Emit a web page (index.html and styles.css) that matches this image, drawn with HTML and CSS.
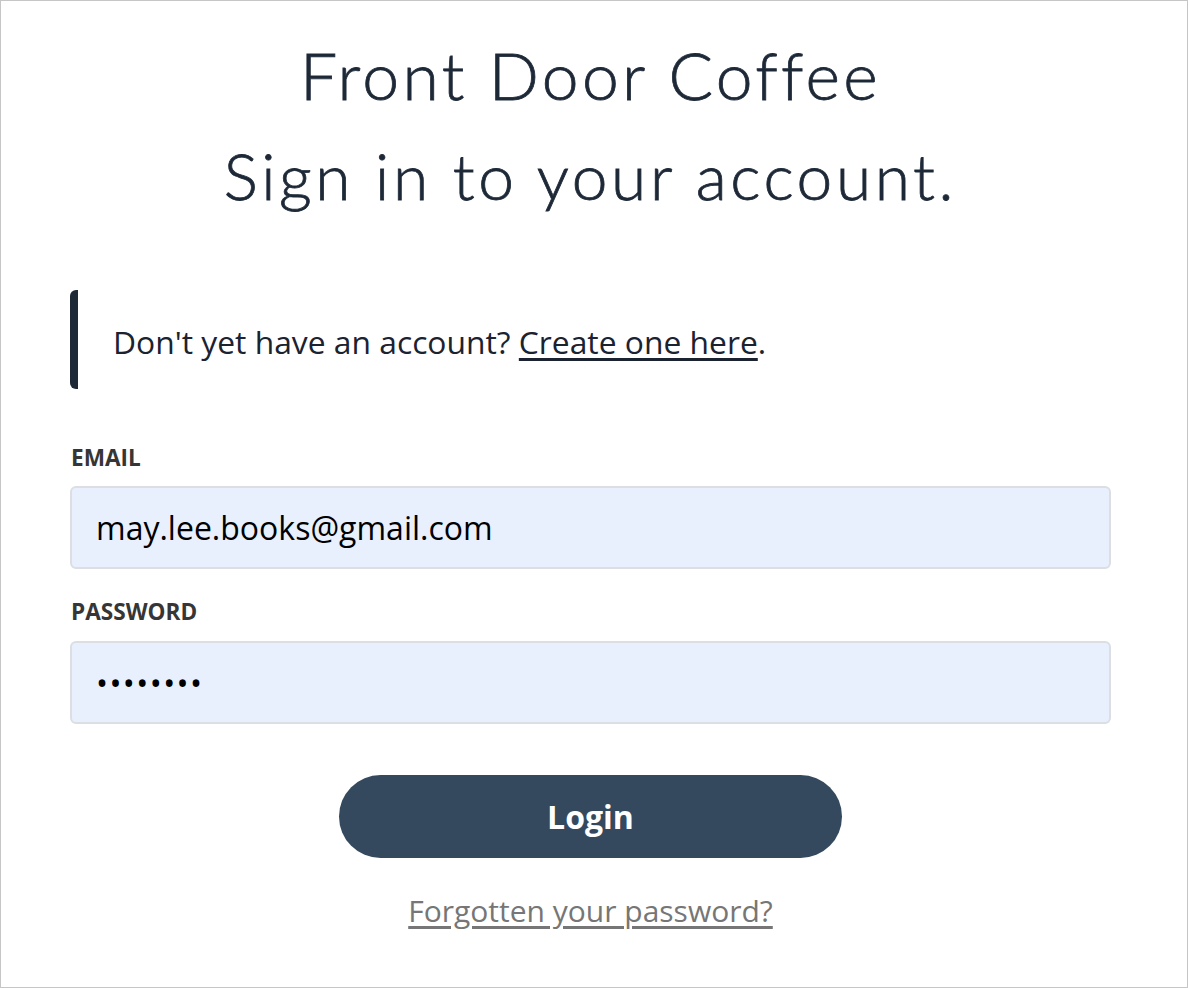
FILE: index.html
```html
<!DOCTYPE html>
<html lang="en">
<head>
<meta charset="utf-8">
<title>Front Door Coffee - Sign in</title>
<link rel="stylesheet" href="styles.css">
</head>
<body>
<div class="frame">
  <main class="page">
    <header class="heading">
      <h1 class="brand">Front Door Coffee</h1>
      <h2 class="subtitle">Sign in to your account.</h2>
    </header>

    <div class="callout">
      <p>Don't yet have an account? <a href="#" class="callout-link">Create one here</a>.</p>
    </div>

    <form class="form">
      <label class="label" for="email">EMAIL</label>
      <input class="input" id="email" type="email" value="may.lee.books@gmail.com">
      <label class="label label-pw" for="password">PASSWORD</label>
      <input class="input input-pw" id="password" type="password" value="secretpw">
      <div class="actions">
        <button type="button" class="btn">Login</button>
        <a href="#" class="forgot">Forgotten your password?</a>
      </div>
    </form>
  </main>
</div>
</body>
</html>
```
FILE: styles.css
```css
* { box-sizing: border-box; }
html, body { margin: 0; padding: 0; background: #fff; }
.frame {
  width: 1188px;
  height: 988px;
  border: 1px solid #c6c6c6;
  overflow: hidden;
}
.page {
  width: 1041px;
  margin-left: 69px;
  font-family: "Open Sans", sans-serif;
  color: #1e2938;
}
.heading { text-align: center; padding-top: 34px; }
.brand {
  margin: 0;
  font-family: "Lato", sans-serif;
  font-weight: 300;
  font-size: 66px;
  letter-spacing: 3.3px;
  line-height: 80px;
  color: #1e2938;
  -webkit-text-stroke: 0.8px #1e2938;
}
.subtitle {
  margin: 0;
  margin-top: 21px;
  font-family: "Lato", sans-serif;
  font-weight: 300;
  font-size: 64px;
  letter-spacing: 3.6px;
  line-height: 80px;
  color: #1e2938;
  -webkit-text-stroke: 0.8px #1e2938;
}
.callout {
  margin-top: 74px;
  height: 99px;
  border-left: 8px solid #1e2938;
  border-radius: 6px 0 0 6px;
  display: flex;
  align-items: center;
  padding-left: 35px;
  padding-top: 3px;
}
.callout p { margin: 0; font-size: 31.8px; color: #1b2230; }
.callout-link { color: #1b2230; text-decoration: underline; text-underline-offset: 4px; }
.form { display: flex; flex-direction: column; margin-top: 54px; }
.label {
  font-weight: 700;
  font-size: 22.6px;
  line-height: 30px;
  color: #363636;
  padding-left: 1px;
}
.input {
  margin-top: 13px;
  height: 83px;
  width: 100%;
  border: 2px solid #dbdee3;
  border-radius: 6px;
  background: #e8f0fe;
  padding: 0 24px;
  font-family: "Open Sans", sans-serif;
  font-size: 32px;
  color: #000;
  outline: none;
}
.label-pw { margin-top: 28px; }
.input-pw { margin-top: 14px; letter-spacing: 1.4px; }
.actions {
  display: flex;
  flex-direction: column;
  align-items: center;
  margin-top: 51px;
}
.btn {
  width: 503px;
  height: 83px;
  border: none;
  border-radius: 42px;
  background: #34495e;
  color: #fff;
  font-family: "Open Sans", sans-serif;
  font-weight: 700;
  font-size: 32px;
  cursor: pointer;
}
.forgot {
  margin-top: 33px;
  font-size: 30px;
  line-height: 40px;
  color: #767676;
  text-decoration: underline;
  text-underline-offset: 4px;
}
```
